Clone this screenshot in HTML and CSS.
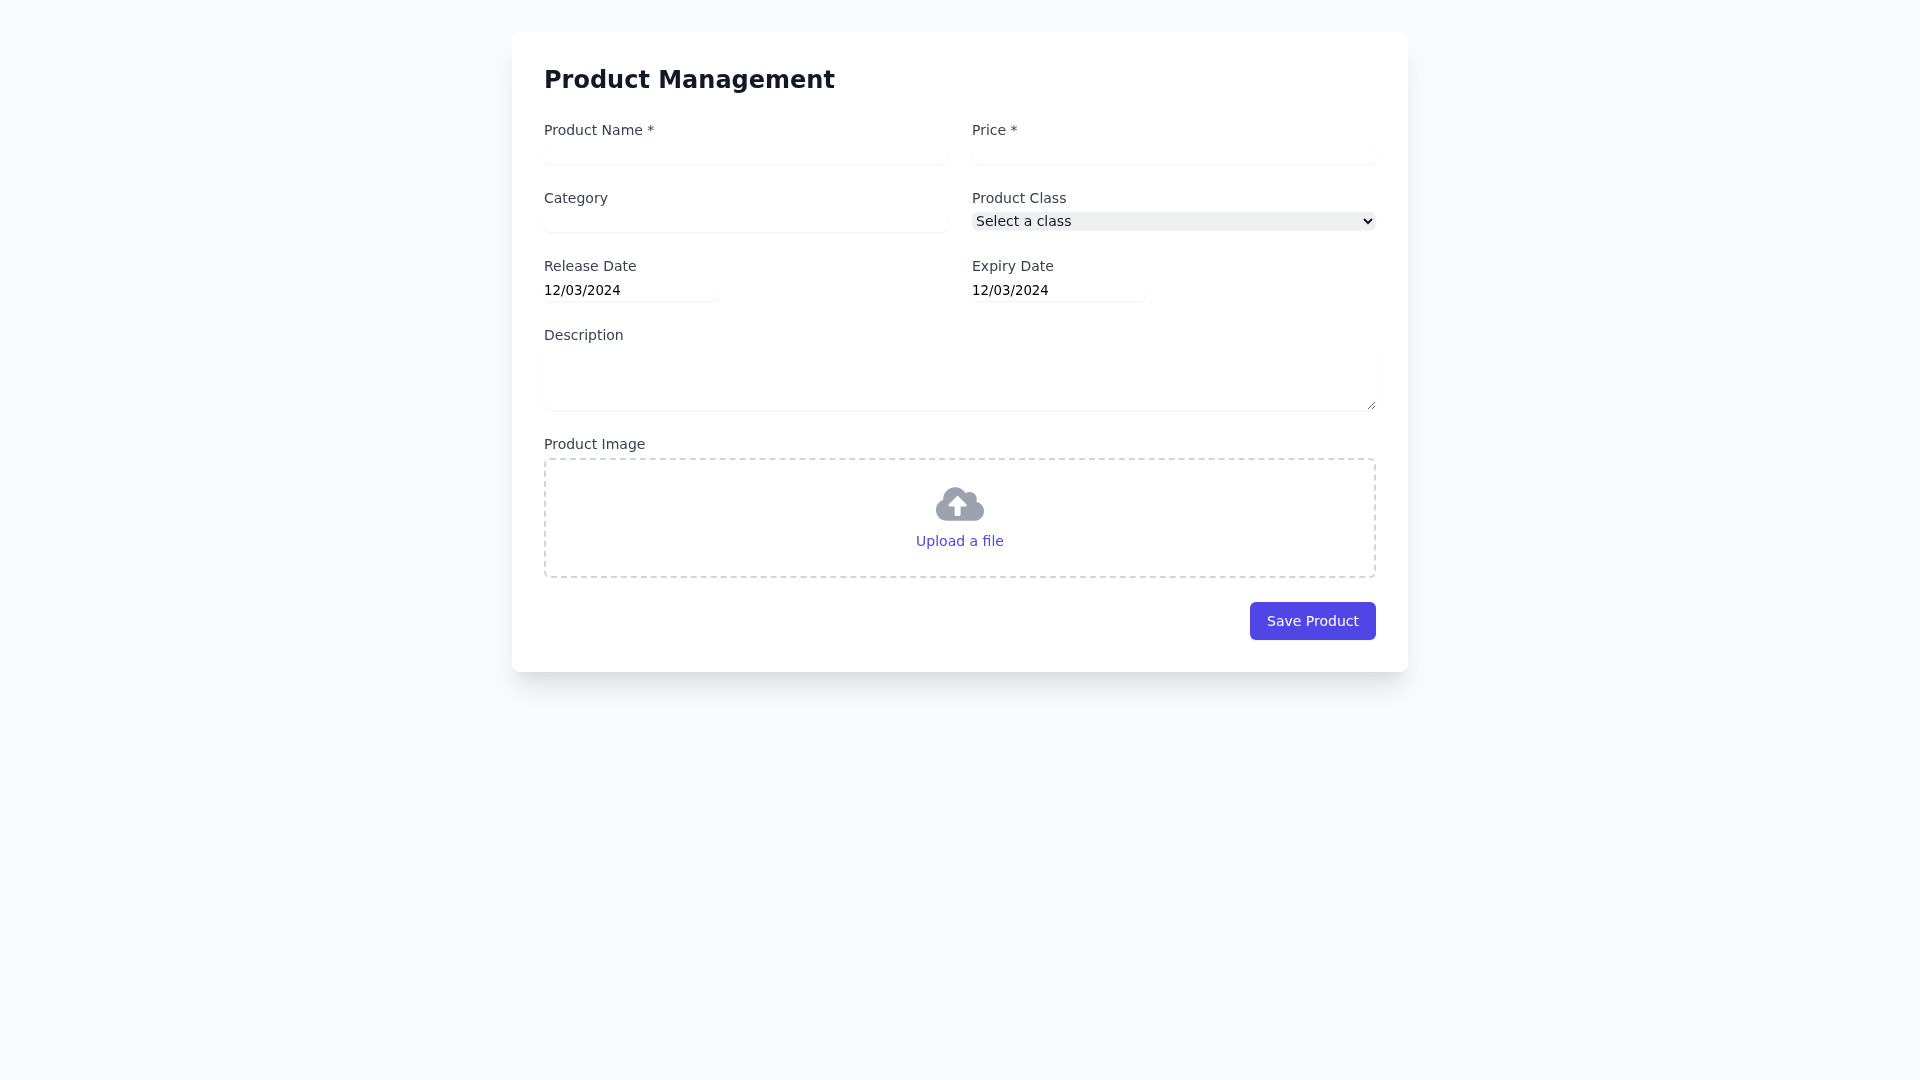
FILE: index.html
```html
<!DOCTYPE html>
<html lang="en">
<head>
    <meta charset="UTF-8">
    <meta name="viewport" content="width=device-width, initial-scale=1.0">
    <title>Product Management</title>
    <link rel="stylesheet" href="styles.css">
</head>
<body>

<div class="card">
    <h1>Product Management</h1>

    <form class="form-grid">
        <div class="field">
            <label for="name">Product Name *</label>
            <input type="text" id="name">
        </div>
        <div class="field">
            <label for="price">Price *</label>
            <input type="text" id="price">
        </div>

        <div class="field">
            <label for="category">Category</label>
            <input type="text" id="category">
        </div>
        <div class="field">
            <label for="productClass">Product Class</label>
            <select id="productClass">
                <option>Select a class</option>
            </select>
        </div>

        <div class="field">
            <label for="releaseDate">Release Date</label>
            <input type="text" id="releaseDate" class="date-input" value="12/03/2024">
        </div>
        <div class="field">
            <label for="expiryDate">Expiry Date</label>
            <input type="text" id="expiryDate" class="date-input" value="12/03/2024">
        </div>

        <div class="field full">
            <label for="description">Description</label>
            <textarea id="description" rows="3"></textarea>
        </div>

        <div class="field full">
            <label>Product Image</label>
            <div class="upload-box">
                <svg class="upload-icon" viewBox="0 0 640 512" aria-hidden="true">
                    <path d="M537.6 226.6c4.1-10.7 6.4-22.4 6.4-34.6 0-53-43-96-96-96-19.7 0-38.1 6-53.3 16.2C367 64.2 315.3 32 256 32c-88.4 0-160 71.6-160 160 0 2.7.1 5.4.2 8.1C40.2 219.8 0 273.2 0 336c0 79.5 64.5 144 144 144h368c70.7 0 128-57.3 128-128 0-61.9-44-113.6-102.4-125.4zM393.4 288H328v112c0 8.8-7.2 16-16 16h-48c-8.8 0-16-7.2-16-16V288h-65.4c-14.3 0-21.4-17.2-11.3-27.3l105.4-105.4c6.2-6.2 16.4-6.2 22.6 0l105.4 105.4c10.1 10.1 2.9 27.3-11.3 27.3z"/>
                </svg>
                <a href="#" class="upload-link">Upload a file</a>
            </div>
        </div>

        <div class="actions full">
            <button type="button" class="save-btn">Save Product</button>
        </div>
    </form>
</div>

</body>
</html>
```

FILE: styles.css
```css
/* General Reset */
* {
    margin: 0;
    padding: 0;
    box-sizing: border-box;
}

body {
    font-family: 'DejaVu Sans', sans-serif;
    background: #f9fafb;
    color: #111827;
    padding: 32px 0;
    min-height: 100vh;
}

.card {
    width: 896px;
    margin: 0 auto;
    padding: 32px;
    background: #fff;
    border-radius: 8px;
    box-shadow: 0 20px 25px -5px rgba(0, 0, 0, 0.1), 0 10px 10px -5px rgba(0, 0, 0, 0.04);
    will-change: transform;
}

h1 {
    font-size: 24px;
    line-height: 32px;
    font-weight: 700;
    color: #111827;
    margin-bottom: 24px;
}

.form-grid {
    display: grid;
    grid-template-columns: 1fr 1fr;
    gap: 24px;
}

.full {
    grid-column: 1 / -1;
}

label {
    display: block;
    font-size: 14px;
    line-height: 20px;
    color: #374151;
    margin-bottom: 4px;
}

input,
textarea {
    display: block;
    width: 100%;
    height: 20px;
    border: none;
    outline: none;
    font-family: inherit;
    font-size: 14px;
    line-height: 20px;
    background: #fff;
    border-radius: 6px;
    box-shadow: 0 1px 2px rgba(0, 0, 0, 0.05);
}

.date-input {
    width: 174px;
    height: 21px;
    font-size: 13.33px;
    color: #000;
}

select {
    display: block;
    width: 100%;
    font-family: inherit;
    font-size: 14px;
    border: none;
    background-color: #eeeff1;
    color: #111827;
    border-radius: 6px;
    box-shadow: 0 1px 2px rgba(0, 0, 0, 0.05);
}

textarea {
    height: 61px;
}

.upload-box {
    height: 120px;
    padding-top: 20px;
    border: 2px dashed #d1d5db;
    border-radius: 6px;
    text-align: center;
}

.upload-icon {
    display: block;
    width: 48px;
    height: 48px;
    margin: 0 auto 3px;
    fill: #9ca3af;
}

.upload-link {
    font-size: 14px;
    line-height: 20px;
    color: #4f46e5;
    text-decoration: none;
}

.actions {
    display: flex;
    justify-content: flex-end;
}

.save-btn {
    height: 38px;
    padding: 0 17px;
    font-family: inherit;
    font-size: 14px;
    color: #fff;
    background: #4f46e5;
    border: none;
    border-radius: 6px;
    cursor: pointer;
    box-shadow: 0 1px 2px rgba(0, 0, 0, 0.05);
}
```
